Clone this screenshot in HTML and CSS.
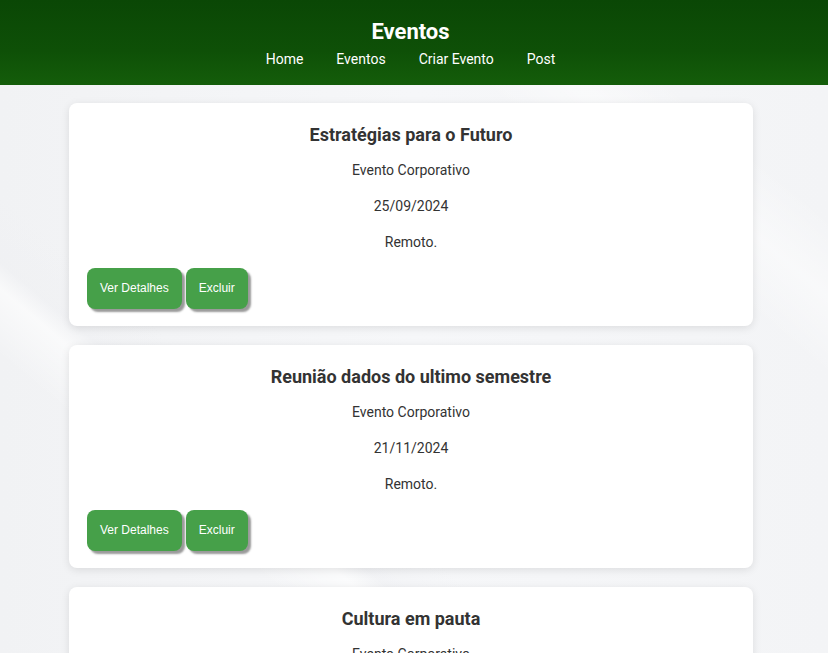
FILE: index.html
```html
<!DOCTYPE html>
<html lang="pt-BR">
<head>
<meta charset="utf-8">
<title>Eventos</title>
<link rel="stylesheet" href="styles.css">
</head>
<body>
<header class="site-header">
  <h1 class="site-title">Eventos</h1>
  <nav class="site-nav">
    <a href="#">Home</a>
    <a href="#">Eventos</a>
    <a href="#">Criar Evento</a>
    <a href="#">Post</a>
  </nav>
</header>
<main class="events">
  <article class="card">
    <h2 class="card-title">Estratégias para o Futuro</h2>
    <p class="card-text">Evento Corporativo</p>
    <p class="card-text">25/09/2024</p>
    <p class="card-text">Remoto.</p>
    <div class="card-actions">
      <button class="btn">Ver Detalhes</button>
      <button class="btn">Excluir</button>
    </div>
  </article>
  <article class="card">
    <h2 class="card-title">Reunião dados do ultimo semestre</h2>
    <p class="card-text">Evento Corporativo</p>
    <p class="card-text">21/11/2024</p>
    <p class="card-text">Remoto.</p>
    <div class="card-actions">
      <button class="btn">Ver Detalhes</button>
      <button class="btn">Excluir</button>
    </div>
  </article>
  <article class="card">
    <h2 class="card-title">Cultura em pauta</h2>
    <p class="card-text">Evento Corporativo</p>
    <p class="card-text">10/12/2024</p>
    <p class="card-text">Remoto.</p>
    <div class="card-actions">
      <button class="btn">Ver Detalhes</button>
      <button class="btn">Excluir</button>
    </div>
  </article>
</main>
</body>
</html>
```

FILE: styles.css
```css
* { box-sizing: border-box; }

html, body {
  margin: 0;
  padding: 0;
}

body {
  font-family: Roboto, "Liberation Sans", Arial, sans-serif;
  color: #333;
  min-height: 100vh;
  background-color: #f3f4f6;
  background-image:
    linear-gradient(40deg, rgba(255,255,255,0) 22%, rgba(255,255,255,0.6) 27%, rgba(238,239,242,0.4) 29%, rgba(255,255,255,0) 34%),
    linear-gradient(40deg, rgba(255,255,255,0) 72%, rgba(255,255,255,0.45) 78%, rgba(255,255,255,0) 84%),
    linear-gradient(90deg, #f1f2f4 0%, #f6f7f9 50%, #f3f4f6 100%);
  background-attachment: fixed;
}

.site-header {
  height: 85px;
  padding: 19px 7px 0 0;
  text-align: center;
  background: linear-gradient(180deg, #0a4705 0%, #0e5007 60%, #145d0a 100%);
  color: #fff;
}

.site-title {
  margin: 0;
  font-size: 22px;
  line-height: 26px;
  font-weight: 700;
}

.site-nav {
  margin-top: 6px;
  display: flex;
  justify-content: center;
  gap: 33px;
  font-size: 14px;
  line-height: 17px;
}

.site-nav a {
  color: #fff;
  text-decoration: none;
}

.events {
  padding: 18px 75px 20px 69px;
  display: flex;
  flex-direction: column;
  gap: 19px;
}

.card {
  background: #fff;
  border-radius: 8px;
  box-shadow: 0 2px 8px rgba(0, 0, 0, 0.1);
  padding: 21px 18px 17px;
  text-align: center;
}

.card-title {
  margin: 0 0 16px;
  font-size: 18px;
  line-height: 22px;
  font-weight: 700;
  color: #333;
}

.card-text {
  margin: 0 0 20px;
  font-size: 14px;
  line-height: 16px;
  color: #333;
}

.card-text:last-of-type {
  margin-bottom: 18px;
}

.card-actions {
  display: flex;
  gap: 4px;
}

.btn {
  font-family: "Liberation Sans", Arial, sans-serif;
  font-size: 12px;
  line-height: 15px;
  padding: 13px 13px;
  background: #46a049;
  color: #fff;
  border: none;
  border-radius: 8px;
  box-shadow: 3px 3px 2px #9a9a9a;
  cursor: pointer;
}
```
